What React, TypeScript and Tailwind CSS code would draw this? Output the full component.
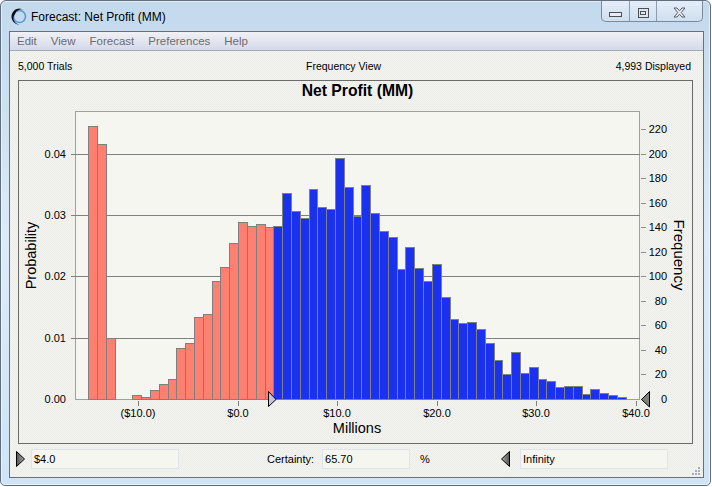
const MENU = ['Edit', 'View', 'Forecast', 'Preferences', 'Help'];

// top edge of each histogram bar in page px, null = empty bin
const TOPS: (number | null)[] = [
  126, 144, 338, null, null, 395, 397, 390, 384, 379, 348, 343, 317, 314, 281, 267, 243, 222, 226, 224, 227,
  226, 193, 211, 218, 189, 207, 209, 158, 187, 216, 185, 213, 231, 237, 269, 247, 268, 281, 264, 297, 319, 323, 322,
  329, 343, 360, 374, 352, 373, 367, 379, 381, 387, 386, 386, 394, 389, 393, 395, 397,
];
const FIRST_BLUE = 21;
const BAR_X = 88.3;
const BAR_W = 8.81;
const PLOT_TOP = 111;
const PLOT_BOTTOM = 399;
const PLOT_LEFT = 75;
const PLOT_RIGHT = 639;
const CHART_X = 19;
const CHART_Y = 81;

const GRID = [154, 215, 276, 338];
const PROB: [string, number][] = [['0.04', 154], ['0.03', 215], ['0.02', 276], ['0.01', 338], ['0.00', 399]];
const FREQ = [
  [220, 129], [200, 154], [180, 178], [160, 203], [140, 227], [120, 252],
  [100, 276], [80, 301], [60, 325], [40, 350], [20, 374], [0, 399],
];
const XT: [string, number][] = [
  ['($10.0)', 138], ['$0.0', 238], ['$10.0', 337], ['$20.0', 437], ['$30.0', 536], ['$40.0', 636],
];

function Chart() {
  const sx = (x: number) => Math.round(x) - CHART_X + 0.5;
  const sy = (y: number) => y - CHART_Y + 0.5;
  return (
    <svg width="673" height="362" className="block" style={{ fontFamily: '"Liberation Sans", Arial, sans-serif' }}>
      <text x={357.5 - CHART_X} y={96 - CHART_Y} textAnchor="middle" fontSize="15.7" fontWeight="700" fill="#000">Net Profit (MM)</text>
      <rect x={sx(PLOT_LEFT)} y={sy(PLOT_TOP)} width={PLOT_RIGHT - PLOT_LEFT} height={PLOT_BOTTOM - PLOT_TOP} fill="#f5f6f0" stroke="#a0a0a0" shapeRendering="crispEdges" />
      {GRID.map((y) => (
        <line key={y} x1={sx(70)} x2={sx(639)} y1={sy(y)} y2={sy(y)} stroke="#808080" shapeRendering="crispEdges" />
      ))}
      {TOPS.map((top, i) => {
        if (top === null) return null;
        const x0 = sx(BAR_X + i * BAR_W);
        const x1 = sx(BAR_X + (i + 1) * BAR_W);
        return (
          <rect
            key={i}
            x={x0}
            y={sy(top)}
            width={x1 - x0}
            height={PLOT_BOTTOM - top}
            fill={i < FIRST_BLUE ? '#ff8070' : '#1a32ee'}
            stroke="#808080"
            shapeRendering="crispEdges"
          />
        );
      })}
      {FREQ.map(([v, y]) => (
        <g key={v}>
          <line x1={sx(640)} x2={sx(645)} y1={sy(y)} y2={sy(y)} stroke="#909090" shapeRendering="crispEdges" />
          <text x={667 - CHART_X} y={y - CHART_Y + 4} fontSize="11" textAnchor="end" fill="#000">{v}</text>
        </g>
      ))}
      {PROB.map(([p, y]) => (
        <text key={p} x={66 - CHART_X} y={y - CHART_Y + 4} fontSize="11" textAnchor="end" fill="#000">{p}</text>
      ))}
      {XT.map(([label, x]) => (
        <g key={label}>
          <line x1={sx(x)} x2={sx(x)} y1={sy(400)} y2={sy(405)} stroke="#808080" shapeRendering="crispEdges" />
          <text x={x - CHART_X} y={417 - CHART_Y} fontSize="11" textAnchor="middle" fill="#000">{label}</text>
        </g>
      ))}
      <text x={357 - CHART_X} y={433 - CHART_Y} fontSize="14.5" textAnchor="middle" fill="#000">Millions</text>
      <text transform={`translate(${36 - CHART_X} ${255.5 - CHART_Y}) rotate(-90)`} fontSize="14.5" textAnchor="middle" fill="#000">Probability</text>
      <text transform={`translate(${674 - CHART_X} ${255 - CHART_Y}) rotate(90)`} fontSize="15" textAnchor="middle" fill="#000">Frequency</text>
      <polygon points={`${268.5 - CHART_X},${391.5 - CHART_Y} ${276 - CHART_X},${399.5 - CHART_Y} ${268.5 - CHART_X},${406.5 - CHART_Y}`} fill="#c4c4dc" stroke="#000" />
      <polygon points={`${649.5 - CHART_X},${391.5 - CHART_Y} ${641.5 - CHART_X},${399.5 - CHART_Y} ${649.5 - CHART_X},${407 - CHART_Y}`} fill="#808080" stroke="#000" />
    </svg>
  );
}

function Grip({ dir }: { dir: 'left' | 'right' }) {
  return (
    <svg width="9" height="16" className="block shrink-0">
      <defs>
        <linearGradient id={`g-${dir}`} x1="0" x2="1" y1="0" y2="0">
          <stop offset="0" stopColor={dir === 'right' ? '#555' : '#a8a8a8'} />
          <stop offset="1" stopColor={dir === 'right' ? '#a8a8a8' : '#555'} />
        </linearGradient>
      </defs>
      <polygon points={dir === 'right' ? '0.5,0.5 8.5,8 0.5,15.5' : '8.5,0.5 0.5,8 8.5,15.5'} fill={`url(#g-${dir})`} stroke="#000" />
    </svg>
  );
}

function ValueBox({ value, w }: { value: string; w: string }) {
  return (
    <div className={`${w} h-[20px] flex items-center pl-[2px] text-[11px] text-black bg-[#f5f6f0] border border-[#dfe3ea]`}>
      {value}
    </div>
  );
}

export default function App() {
  return (
    <div
      className="w-[712px] h-[487px] overflow-hidden bg-white"
      style={{ fontFamily: '"Liberation Sans", Arial, sans-serif' }}
    >
      <div className="w-[711px] h-[486px] flex flex-col rounded-t-[6px] rounded-b-[5px] border border-[#5f6f80] shadow-[inset_0_0_0_1px_rgba(255,255,255,0.55)] bg-gradient-to-b from-[#c3d9ec] via-[#dcebf8] to-[#cfe4f6] pl-[8px] pr-[6px] pb-[7px]">
        {/* title bar */}
        <div className="h-[30px] shrink-0 flex items-start relative">
          <svg width="20" height="20" viewBox="0 0 20 20" className="absolute left-[0px] top-[6px]">
            <circle cx="10.5" cy="9.5" r="6" fill="none" stroke="#5a9ad4" strokeWidth="1.6" />
            <path d="M15 3 A8 8 0 1 0 11 17.6 A6.5 6.5 0 0 1 6 7 A6.5 6.5 0 0 1 15 3Z" fill="#0c0c14" />
          </svg>
          <span className="ml-[22px] mt-[8px] text-[12px] leading-[16px] text-black">Forecast: Net Profit (MM)</span>
          <div className="ml-auto mr-[1px] w-[102px] h-[21px] flex rounded-b-[5px] border border-t-0 border-[#7c8a99] bg-gradient-to-b from-[#e4eef8] to-[#cfdff0]">
            <div className="w-[28px] flex items-center justify-center border-r border-[#8f9cab]">
              <div className="w-[13px] h-[5px] mt-[7px] border border-[#4a4f58] bg-[#e8edf3]" />
            </div>
            <div className="w-[27px] flex items-center justify-center border-r border-[#8f9cab]">
              <div className="w-[11px] h-[10px] mt-[4px] flex items-center justify-center border border-[#4a4f58] bg-[#dde5ee]">
                <div className="w-[6px] h-[4px] border border-[#4a4f58]" />
              </div>
            </div>
            <div className="flex-1 flex items-center justify-center">
              <svg width="13" height="11" viewBox="0 0 13 11" className="mt-[2px]">
                <path d="M1 1h3l2.5 2.8L9 1h3L8.2 5.5 12 10H9L6.5 7.2 4 10H1l3.8-4.5Z" fill="#e8edf2" stroke="#555c66" />
              </svg>
            </div>
          </div>
        </div>

        {/* client area */}
        <div className="flex-1 relative flex flex-col border border-[#6b7078] bg-[#f0f0ec] bg-[repeating-conic-gradient(#f3f3ef_0_25%,#ecece9_0_50%)] bg-[length:2px_2px]">
          <div className="h-[19px] shrink-0 flex items-center pt-[1px] pl-[7px] gap-[14px] text-[11.5px] text-[#6d6d6d] bg-gradient-to-b from-[#f0f1f5] to-[#d5d9ea] border-b border-[#a3abb8]">
            {MENU.map((m) => (
              <span key={m}>{m}</span>
            ))}
          </div>
          <div className="h-[29px] shrink-0 flex items-center justify-between pt-[3px] pl-[8px] pr-[12px] text-[10.5px] text-black relative">
            <span>5,000 Trials</span>
            <span className="absolute left-[296px]">Frequency View</span>
            <span>4,993 Displayed</span>
          </div>
          <div className="ml-[8px] w-[675px] h-[364px] shrink-0 border border-[#6b6b6b] overflow-hidden">
            <Chart />
          </div>
          <div className="flex items-center mt-[5px] pl-[6px] pr-[35px] text-[11px] text-black">
            <Grip dir="right" />
            <div className="ml-[6px]">
              <ValueBox value="$4.0" w="w-[148px]" />
            </div>
            <span className="ml-[88px]">Certainty:</span>
            <div className="ml-[8px]">
              <ValueBox value="65.70" w="w-[88px]" />
            </div>
            <span className="ml-[10px]">%</span>
            <div className="ml-auto flex items-center gap-[10px]">
              <Grip dir="left" />
              <ValueBox value="Infinity" w="w-[148px]" />
            </div>
          </div>
          {/* resize grip */}
          <svg width="10" height="10" className="absolute right-[2px] bottom-[1px]">
            <g fill="#a8aeb6">
              <rect x="7" y="1" width="2" height="2" />
              <rect x="4" y="4" width="2" height="2" />
              <rect x="7" y="4" width="2" height="2" />
              <rect x="1" y="7" width="2" height="2" />
              <rect x="4" y="7" width="2" height="2" />
              <rect x="7" y="7" width="2" height="2" />
            </g>
          </svg>
        </div>
      </div>
    </div>
  );
}
